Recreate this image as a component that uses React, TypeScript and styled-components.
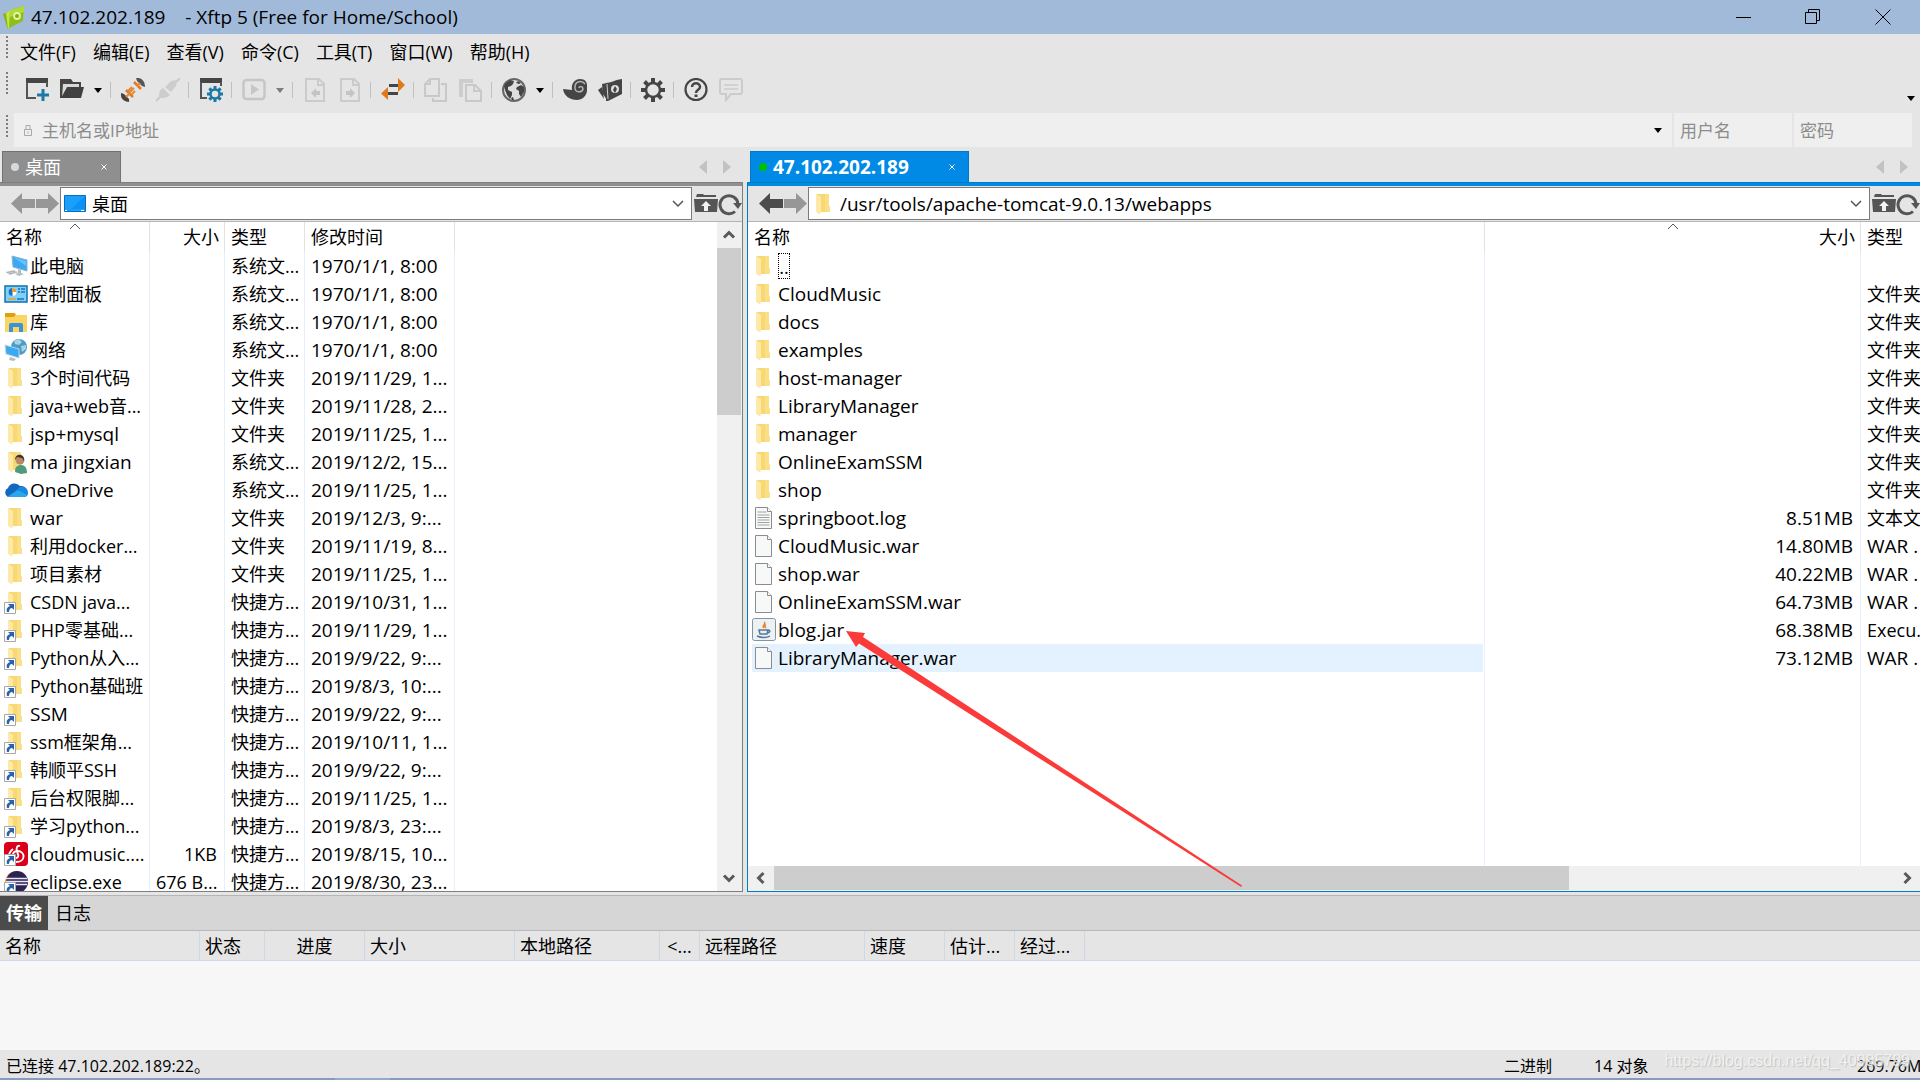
import React from "react";
import styled, { createGlobalStyle, css } from "styled-components";

const Global = createGlobalStyle`
  *, *::before, *::after { box-sizing: border-box; }
  html, body { margin: 0; padding: 0; }
  body { background: #e5e5e5; color: #000; font: 18px/24px "Open Sans", "Noto Sans CJK SC", sans-serif; }
  button, input, select { font: inherit; color: inherit; margin: 0; padding: 0; border: 0; background: none; border-radius: 0; outline: none; }
  svg { display: block; flex: none; }
`;

const Window = styled.div`
  position: relative;
  display: flex;
  flex-direction: column;
  height: 100vh;
  overflow: hidden;
  background: #e5e5e5;
`;

const TitleBar = styled.header`
  flex: none;
  display: flex;
  align-items: center;
  height: 34px;
  padding: 0 2px 0 3px;
  background: #a2bada;
`;
const Title = styled.h1`
  flex: 1;
  margin: 0 0 0 4px;
  font-size: 19px;
  line-height: 34px;
  font-weight: 400;
  white-space: pre;
`;
const WindowButton = styled.button`
  display: grid;
  place-items: center;
  width: 70px;
  height: 34px;
  &:first-of-type { padding-left: 2px; }
`;

const Bar = styled.div<{ $h: number }>`
  flex: none;
  display: flex;
  align-items: center;
  height: ${(p) => p.$h}px;
  padding-left: 6px;
`;
const Grip = styled.span`
  align-self: flex-start;
  width: 2px;
  height: 24px;
  margin-top: 2px;
  background: repeating-linear-gradient(#7c7c7c 0 2px, transparent 2px 4px);
`;
const MenuList = styled.nav`
  display: flex;
  gap: 17px;
  padding-left: 12px;
`;
const MenuButton = styled.button`
  line-height: 24px;
`;

const Tools = styled.div`
  flex: 1;
  align-self: flex-start;
  display: flex;
  align-items: center;
  height: 40px;
  padding-left: 11px;
`;
const ToolButton = styled.button`
  display: grid;
  place-items: center;
  width: 35px;
  height: 30px;
`;
const CaretButton = styled.button`
  display: grid;
  place-items: center;
  width: 18px;
  height: 30px;
`;
const Divider = styled.span`
  width: 1px;
  height: 16px;
  margin: 0 4px 0 3px;
  background: #c0c0c0;
`;
const Overflow = styled(CaretButton)`
  align-self: flex-end;
`;

const HostField = styled.label`
  flex: 1;
  display: flex;
  align-items: center;
  gap: 10px;
  height: 34px;
  margin-left: 6px;
  padding: 0 5px 0 10px;
  background: #efefef;
`;
const FieldInput = styled.input`
  flex: 1;
  min-width: 0;
  height: 34px;
  font-size: 17px;
  &::placeholder { color: #8c8c8c; opacity: 1; }
`;
const SideInput = styled(FieldInput)`
  flex: none;
  width: 118px;
  margin-left: 2px;
  padding-left: 6px;
  background: #efefef;
`;
const AddressBar = styled(Bar)`
  padding-right: 8px;
`;

const Panes = styled.main`
  flex: 1;
  min-height: 0;
  display: grid;
  grid-template-columns: 743fr 1173fr;
  gap: 4px;
  padding-top: 4px;
`;
const Pane = styled.section`
  display: flex;
  flex-direction: column;
  min-width: 0;
  min-height: 0;
`;
const TabRow = styled.div<{ $pad: number }>`
  flex: none;
  display: flex;
  justify-content: space-between;
  height: 31px;
  padding-left: ${(p) => p.$pad}px;
`;
const Tab = styled.div<{ $active?: boolean; $w: number }>`
  display: flex;
  align-items: center;
  width: ${(p) => p.$w}px;
  padding: 0 11px 0 8px;
  border: 1px solid ${(p) => (p.$active ? "#0078c8" : "#727272")};
  border-bottom: 0;
  background: ${(p) => (p.$active ? "#008ae5" : "#8f8f8f")};
  color: #fff;
  ${(p) => p.$active && css`font-weight: 700; font-size: 19px;`}
`;
const TabDot = styled.span<{ $c: string }>`
  width: 8px;
  height: 8px;
  margin-right: 6px;
  border-radius: 50%;
  background: ${(p) => p.$c};
`;
const TabLabel = styled.span`
  flex: 1;
  white-space: nowrap;
`;
const CloseButton = styled.button`
  display: grid;
  place-items: center;
  width: 10px;
  height: 16px;
`;
const TabArrows = styled.div`
  display: flex;
  align-items: center;
  gap: 16px;
  padding-right: 11px;
`;
const Frame = styled.div<{ $active?: boolean }>`
  flex: 1;
  min-height: 0;
  display: flex;
  flex-direction: column;
  border-top: 1px solid;
  border-bottom: 1px solid;
  border-color: ${(p) => (p.$active ? "#007cc4" : "#7f7f7f")};
  ${(p) => (p.$active ? "border-left: 1px solid #007cc4;" : "border-right: 1px solid #7f7f7f;")}
`;
const Stripe = styled.div<{ $active?: boolean }>`
  flex: none;
  height: 3px;
  background: ${(p) => (p.$active ? "#008ae5" : "#8f8f8f")};
`;
const PathRow = styled.div`
  flex: none;
  display: flex;
  align-items: center;
  height: 36px;
  padding: 1px 0 1px 11px;
  border-bottom: 1px solid #b4b4b4;
`;
const IconButton = styled.button`
  display: grid;
  place-items: center;
  width: 24px;
  height: 32px;
`;
const PathBox = styled.label`
  flex: 1;
  min-width: 0;
  display: flex;
  align-items: center;
  height: 33px;
  margin: 0 2px 0 1px;
  padding: 0 7px 0 3px;
  border: 1px solid #7a7a7a;
  background: #fff;
`;
const PathSelect = styled.select<{ $latin?: boolean }>`
  flex: 1;
  min-width: 0;
  height: 30px;
  padding-left: 4px;
  font-size: ${(p) => (p.$latin ? 19 : 18)}px;
  appearance: none;
`;

const ListArea = styled.div`
  flex: 1;
  min-height: 0;
  display: flex;
  background: #fff;
`;
const ListClip = styled.div`
  flex: 1;
  min-width: 0;
  overflow: hidden;
`;
const FileTable = styled.table`
  width: 100%;
  height: 100%;
  table-layout: fixed;
  border-collapse: separate;
  border-spacing: 0;
`;
const Th = styled.th<{ $end?: boolean }>`
  position: relative;
  height: 30px;
  padding: 0 5px 0 6px;
  border-right: 1px solid #e2e2e2;
  font-weight: 400;
  line-height: 30px;
  white-space: nowrap;
  overflow: hidden;
  text-align: ${(p) => (p.$end ? "right" : "left")};
  &:last-child { border-right: 0; }
`;
const SortMark = styled.svg`
  position: absolute;
  top: 1px;
  left: 50%;
  margin-left: -6px;
`;
const Td = styled.td<{ $end?: boolean }>`
  height: 28px;
  padding: 0 ${(p) => (p.$end ? 7 : 0)}px 0 6px;
  border-right: 1px solid #e6f0fc;
  line-height: 28px;
  white-space: nowrap;
  overflow: hidden;
  text-align: ${(p) => (p.$end ? "right" : "left")};
  &:last-child { border-right: 0; }
`;
const NameTd = styled(Td)`
  padding: 0 1px 0 4px;
`;
const NameCell = styled.div<{ $hot?: boolean }>`
  display: flex;
  align-items: center;
  gap: 2px;
  height: 28px;
  background: ${(p) => (p.$hot ? "#e3f2fe" : "transparent")};
`;
const FillTd = styled.td`
  padding: 0;
  border-right: 1px solid #e6f0fc;
  &:last-child { border-right: 0; }
`;
const ParentMark = styled.span`
  width: 12px;
  height: 26px;
  line-height: 28px;
  outline: 1px dotted #000;
  outline-offset: -1px;
  text-align: center;
`;
const VScroll = styled.div`
  flex: none;
  display: flex;
  flex-direction: column;
  width: 25px;
  padding-right: 1px;
  background: #f0f0f0;
`;
const HScroll = styled.div`
  flex: none;
  display: flex;
  height: 25px;
  padding-bottom: 1px;
  background: #f0f0f0;
`;
const ScrollButton = styled.button`
  flex: none;
  display: grid;
  place-items: center;
  width: 26px;
  height: 26px;
  ${VScroll} & { width: 24px; }
  ${HScroll} & { height: 24px; }
`;
const Track = styled.div`
  flex: 1;
  display: flex;
`;
const VThumb = styled.div`
  width: 100%;
  height: 27%;
  background: #cdcdcd;
`;
const HThumb = styled.div`
  width: 71%;
  background: #cdcdcd;
`;

const Dock = styled.section`
  flex: none;
  margin-top: 3px;
  border-top: 1px solid #b5b5b5;
`;
const DockTabs = styled.div`
  display: flex;
  height: 35px;
  border-bottom: 1px solid #b8b8b8;
  background: #d6d6d6;
`;
const DockTab = styled.button<{ $on?: boolean }>`
  padding: 0 ${(p) => (p.$on ? 6 : 7)}px;
  ${(p) => p.$on && css`background: #4b4b4b; color: #fff; font-weight: 700;`}
`;
const DockTable = styled.table`
  width: 100%;
  table-layout: fixed;
  border-collapse: separate;
  border-spacing: 0;
`;
const DockTh = styled.th<{ $mid?: boolean }>`
  height: 30px;
  padding: 0 5px;
  border-right: 1px solid #cfd9e6;
  border-bottom: 1px solid #cfd9e8;
  font-weight: 400;
  white-space: nowrap;
  overflow: hidden;
  text-align: ${(p) => (p.$mid ? "center" : "left")};
  &:last-child { border-right: 0; }
`;
const DockBody = styled.div`
  height: 89px;
  background: #f7f7f7;
`;

const StatusBar = styled.footer`
  flex: none;
  display: flex;
  height: 28px;
  padding-left: 6px;
  font-size: 16px;
  line-height: 32px;
  overflow: hidden;
`;
const StatusCell = styled.span<{ $w?: number }>`
  ${(p) => (p.$w ? `width: ${p.$w}px;` : "flex: 1;")}
  white-space: nowrap;
  overflow: hidden;
`;
const Taskbar = styled.div`
  flex: none;
  height: 2px;
  background: linear-gradient(90deg, #879cbc 335px, #93aacb 335px 390px, #879cbc 390px);
`;
const Watermark = styled.span`
  position: absolute;
  right: 10px;
  bottom: 7px;
  color: #f4f4f4;
  font: 16px/24px "Liberation Sans", sans-serif;
  text-shadow: 1px 1px 1px #bcbcbc;
  opacity: 0.85;
`;
const PointerArrow = styled.svg`
  position: absolute;
  left: 846px;
  top: 631px;
  pointer-events: none;
`;

/* ---------- drawings ---------- */

const S = ({ w = 24, h = 24, children }: { w?: number; h?: number; children: React.ReactNode }) => (
  <svg width={w} height={h} viewBox={`0 0 ${w} ${h}`} fill="none" aria-hidden="true">{children}</svg>
);
const Caret = ({ c = "#000" }: { c?: string }) => <S w={8} h={5}><path d="M0 0h8L4 5z" fill={c} /></S>;
const teeth = [0, 45, 90, 135, 180, 225, 270, 315];

const AppLogo = () => (
  <S>
    <path d="M0 9l5-2 3 14-3 4z" fill="#86b516" />
    <path d="M3 8l5-3 2 15-5 4z" fill="#c9e24a" />
    <path d="M7 5l14-4-1 15L6 23z" fill="#8cc018" />
    <path d="M7 5l14-4v6L7 12z" fill="#aedb36" />
    <ellipse cx="14" cy="11" rx="3.800" ry="4" fill="#e6f3a0" />
    <circle cx="14" cy="11" r="2" fill="#7fae10" />
  </S>
);
const NewIcon = () => (
  <S>
    <path d="M1 0h22v5H1z" fill="#454545" />
    <path d="M2 4v16h9M22 4v5" stroke="#555" strokeWidth="2" />
    <path d="M18 11v12M12 17h12" stroke="#1b79a5" strokeWidth="3" />
  </S>
);
const OpenIcon = () => (
  <S>
    <path d="M1 5h19v4" stroke="#454545" strokeWidth="2" />
    <path d="M3 5h16v4H6l-4 8z" fill="#d8d8d8" />
    <path d="M0 1h11l2 3h8v3h-2V6H3l-1 14H0z" fill="#454545" />
    <path d="M7 9h17l-3 11H1z" fill="#404040" />
  </S>
);
const ConnectIcon = () => (
  <S>
    <path d="M15 0c5-1 9 3 9 9l-3-1-5-5z" fill="#555" />
    <path d="M0 15l3 1 5 5v3c-5 0-9-4-8-9z" fill="#454545" />
    <path d="M13 4l7 7M5 12l7 7" stroke="#e07b1e" strokeWidth="2.500" />
    <path d="M8 15l5-5M5 19l4-4M11 16l3-3M7 13l4-4M16 8l3-3" stroke="#e28a3c" strokeWidth="2" />
  </S>
);
const DisconnectIcon = () => (
  <S>
    <path d="M0 23l4-4M20 4l4-4" stroke="#c9c9c9" strokeWidth="2" />
    <path d="M3 19c0-5 1-7 4-9l7 7c-3 3-6 3-9 3zM9 9l6-6 6-1-1 6-5 6z" fill="#cdcdcd" />
    <path d="M7 9l9 9" stroke="#e5e5e5" strokeWidth="1" />
  </S>
);
const PropsIcon = () => (
  <S>
    <path d="M1 0h22v5H1z" fill="#454545" />
    <path d="M2 4v16h6M22 4v4" stroke="#555" strokeWidth="2" />
    <g fill="#1b79a5">{teeth.map((a) => <rect key={a} x="14.500" y="8" width="3" height="4" transform={`rotate(${a} 16 16)`} />)}</g>
    <circle cx="16" cy="16" r="4.500" stroke="#1b79a5" strokeWidth="2.500" />
  </S>
);
const PlayIcon = () => (
  <S>
    <rect x="1.500" y="2" width="21" height="19" rx="3" stroke="#c6c6c6" strokeWidth="2.500" />
    <path d="M9 6l8 5.500L9 17z" fill="#c6c6c6" />
  </S>
);
const PageIcon = ({ flip }: { flip?: boolean }) => (
  <S>
    <path d="M3 1h13l5 5v17H3z" stroke="#cbcbcb" strokeWidth="2" />
    <path d="M15 1v6h6" stroke="#cbcbcb" strokeWidth="2" />
    <path d={flip ? "M8 13h4v-3l5 5-5 5v-3H8z" : "M17 13h-4v-3l-5 5 5 5v-3h4z"} fill="#c4c4c4" />
  </S>
);
const TransferIcon = () => (
  <S>
    <path d="M8 7.500h10M6 15.500h11" stroke="#454545" strokeWidth="3" />
    <path d="M17 0l7 7-7 7zM7 9v13l-7-6.500z" fill="#df7a1d" />
  </S>
);
const CopyIcon = () => (
  <S>
    <path d="M1 6l5-5h9v17H1zM6 1v5H1" stroke="#c9c9c9" strokeWidth="2" />
    <path d="M17 6h5v17H9v-3" stroke="#c9c9c9" strokeWidth="2" />
  </S>
);
const PasteIcon = () => (
  <S>
    <path d="M0 1h14v4H4v14H0z" fill="#cdcdcd" />
    <path d="M7 7h9l6 6v10H7z" stroke="#c9c9c9" strokeWidth="2" />
    <path d="M15 7v6h7" stroke="#c9c9c9" strokeWidth="2" />
  </S>
);
const GlobeIcon = () => (
  <S>
    <circle cx="12" cy="12" r="11" fill="#dedede" stroke="#666" strokeWidth="2" />
    <path d="M4 5l4-3 4 1-1 3-2 2-3 1 0 3 4 2v3l-2 4-3-4-2-5-1-4zM15 9l4-2 3 2v5l-3 5-2-3v-3l-3-2zM16 3l3 2-2 1-3-1zM9 20l2-1 1 3-2 0z" fill="#454545" />
  </S>
);
const ShellIcon = () => (
  <S>
    <path d="M0 11l9 1c-1-7 3-11 8-11 5 0 7 3 7 6v5c0 6-5 10-10 10C7 22 1 18 0 11z" fill="#454545" />
    <path d="M22 6c-3-4-10-3-10 3-1 6 7 6 8 2 0-3-4-3-4-1" stroke="#b5b5b5" strokeWidth="1.500" />
  </S>
);
const FtpIcon = () => (
  <S>
    <path d="M0 12l4-3 2 12zM4 6l5-1v17l-4-6zM8 5c5 0 8-3 16-4v15l-14 7H8z" fill="#454545" />
    <path d="M9 6l1 15" stroke="#d0d0d0" />
    <circle cx="17" cy="11" r="4" fill="#dedede" />
    <path d="M17 8l2 3-2 4-2-3z" fill="#454545" />
  </S>
);
const GearIcon = () => (
  <S>
    <g fill="#454545">{teeth.map((a) => <rect key={a} x="10" y="0" width="4" height="5" transform={`rotate(${a} 12 12)`} />)}</g>
    <circle cx="12" cy="12" r="7" stroke="#454545" strokeWidth="2.500" />
  </S>
);
const HelpIcon = () => (
  <S>
    <circle cx="12" cy="11.500" r="10.500" stroke="#454545" strokeWidth="2.200" />
    <path d="M8 9c0-5 8-5 8 0 0 3-4 2.500-4 6" stroke="#454545" strokeWidth="2.500" />
    <path d="M10.500 16.500h3v2.500h-3z" fill="#454545" />
  </S>
);
const CommentIcon = () => (
  <S>
    <path d="M3 1h18q2 0 2 2v11q0 2-2 2H12l-5 6v-6H3q-2 0-2-2V3q0-2 2-2z" stroke="#cbcbcb" strokeWidth="2" />
    <path d="M5 7h14M5 11h14" stroke="#cbcbcb" strokeWidth="1.500" />
  </S>
);
const LockIcon = () => (
  <S w={8} h={12}>
    <path d="M.500 5.500h7v6h-7zM2 5V1.500h4V5" stroke="#a8a8a8" />
    <path d="M3.500 7.500h1v2h-1z" fill="#a8a8a8" />
  </S>
);
const ArrowIcon = ({ right, c }: { right?: boolean; c: string }) => (
  <S>
    <path d={right ? "M1 7h12V1l11 10.500L13 22v-6H1z" : "M24 7H11V1L0 11.500 11 22v-6h13z"} fill={c} />
  </S>
);
const UpFolderIcon = () => (
  <S>
    <path d="M2 5l1-3h6l1 1h12v2z" fill="#555" />
    <path d="M0 7h24l-1 13H1z" fill="#555" />
    <path d="M12 9l5 5h-3v5h-4v-5H7z" fill="#f2f2f2" />
  </S>
);
const RefreshIcon = () => (
  <S>
    <path d="M17 19.500A9 9 0 1 1 20 12" stroke="#555" strokeWidth="3" />
    <path d="M15 11h9l-4 6z" fill="#555" />
  </S>
);
const Chevron = () => <S w={12} h={8}><path d="M1 1l5 5 5-5" stroke="#555" strokeWidth="1.500" /></S>;
const DesktopIcon = () => (
  <S w={24} h={18}>
    <path d="M.500.500h21v16H.500z" fill="#1aa0fb" stroke="#0a6db8" />
    <path d="M21 1v13H7z" fill="#0c92f4" />
    <path d="M1 15.500h2M17 15.500h3" stroke="#fff" />
  </S>
);
const FolderShape = () => (
  <>
    <path d="M5 2h12v12l1 1v5H5z" fill="#f8d873" />
    <path d="M13 2h4v12l1 1v5h-5z" fill="#fbdf86" />
    <path d="M4 2l5 3v15l-1 2.500L4 20z" fill="#ffe9a8" />
  </>
);
const Folder = () => <S><FolderShape /></S>;
const LinkBadge = () => (
  <>
    <path d="M.500 12.500h11v11H.500z" fill="#fff" stroke="#a8a8a8" />
    <path d="M4 14h6v6l-2-2c-2 0-3 2-3 4H3c-1-3 0-5 3-6z" fill="#2a63a8" />
  </>
);
const LinkFolder = () => <S><FolderShape /><LinkBadge /></S>;
const ComputerIcon = () => (
  <S>
    <path d="M8 2l15 4v11L9 13z" fill="#39a9f4" stroke="#8fb3cc" />
    <path d="M9 3l13 4v5z" fill="#63c2fa" />
    <path d="M14 15l3 1v3l3 1-5 2-4-2 3-1z" fill="#b5bcc2" />
    <path d="M1 18l9-2 4 2-8 3z" fill="#cdd2d6" />
    <path d="M3 18.500l8-1.500M5 20l8-1.700" stroke="#98a0a7" strokeWidth=".7" />
  </S>
);
const ControlIcon = () => (
  <S>
    <path d="M1 4h22v16H1z" fill="#7fd0fb" stroke="#1171ae" strokeWidth="1.500" />
    <circle cx="8.500" cy="10" r="4" fill="#fff" />
    <path d="M8.500 10V6a4 4 0 0 0 0 8z" fill="#1a72b8" />
    <path d="M8.500 10V6a4 4 0 0 1 4 4z" fill="#f39a2a" />
    <path d="M14 7h2M17 7h4M14 10h2M17 10h4" stroke="#1a72b8" strokeWidth="1.500" />
    <path d="M4 17h8" stroke="#f39a2a" strokeWidth="1.500" />
    <path d="M13 17h7" stroke="#1a72b8" strokeWidth="1.500" />
  </S>
);
const LibraryIcon = () => (
  <S>
    <path d="M1 3h9l2 2h11v17H1z" fill="#fcd462" />
    <path d="M1 3h9l2 1-2 3H1z" fill="#dfa012" />
    <path d="M5 22v-7q0-2 2-2h10q2 0 2 2v7h-4v-5H9v5z" fill="#3b93da" />
  </S>
);
const NetworkIcon = () => (
  <S>
    <circle cx="15" cy="9" r="8" fill="#4b9cc8" />
    <path d="M10 3l5-2 3 3-3 3-4-1zM17 8l5-1v4l-4 3z" fill="#a8d3e4" />
    <path d="M1 7l14 4v9L2 16z" fill="#39a9f4" stroke="#c3d4df" />
    <path d="M6 19l6 2-2 2-5-1z" fill="#b5bcc2" />
  </S>
);
const UserFolder = () => (
  <S>
    <FolderShape />
    <path d="M11 22c0-5 2-7 6-7s6 3 6 8l-6 1z" fill="#4f9a78" />
    <circle cx="16" cy="10" r="4.500" fill="#b98a64" />
    <path d="M11 10c0-7 10-7 9 1l-2-3-5-1z" fill="#3d3630" />
  </S>
);
const CloudIcon = () => (
  <S>
    <path d="M4 19a5 5 0 0 1 0-9 7 7 0 0 1 12-2 6 6 0 0 1 7 6c0 3-2 5-4 5z" fill="#1268bd" />
    <path d="M16 9a6 6 0 0 1 8 6c0 3-2 4-4 4l-9-6z" fill="#1788dc" />
    <path d="M3 19l9-6q2-1 4 0l7 4q-1 2-4 2z" fill="#2aa7ea" />
  </S>
);
const MusicIcon = () => (
  <S>
    <rect width="24" height="24" rx="4" fill="#d9001b" />
    <path d="M16 4c-3-1-4 2-3 5l1 4M9 7c-7 5-3 13 4 13 8 0 9-10 1-11-6 0-7 7-2 7 2 0 3-2 2-4" stroke="#fff" strokeWidth="1.800" />
    <LinkBadge />
  </S>
);
const EclipseIcon = () => (
  <S>
    <path d="M1 16C0 8 4 2 12 1L6 22z" fill="#f59a23" />
    <circle cx="13" cy="12" r="11" fill="#2c2255" />
    <path d="M2 8.500h21M2 11.500h22M2 14.500h21" stroke="#e8e6f2" strokeWidth="1.500" />
    <LinkBadge />
  </S>
);
const FileIcon = ({ lined }: { lined?: boolean }) => (
  <S>
    <path d="M3.500 1.500h12l4 4v17h-16z" fill="#f7f8f8" stroke="#8c8c8c" />
    <path d="M15.500 1.500v4h4" fill="#fff" stroke="#8c8c8c" />
    {lined && <path d="M5.500 6h9M5.500 9h12M5.500 11.500h12M5.500 14h12M5.500 16.500h12M5.500 19h12" stroke="#a2a2a2" />}
  </S>
);
const JarIcon = () => (
  <S>
    <rect x=".5" y=".5" width="23" height="22" rx="2" fill="#eef1f3" stroke="#7f95a6" />
    <path d="M12 4c3 2-3 4 0 6M14 7c-2 1-1 2 0 3" stroke="#e8832a" strokeWidth="1.500" />
    <path d="M7 12h9l-1 4H8zM5 18c4 2 10 2 13 0M16 12c3 0 2 3-1 3" stroke="#54789a" strokeWidth="1.500" />
  </S>
);
const ScrollArrow = ({ a = 0 }: { a?: number }) => (
  <S w={14} h={14}><path d="M2 9.500l5-5 5 5" stroke="#5a5a5a" strokeWidth="3" transform={`rotate(${a} 7 7)`} /></S>
);
const TabArrow = ({ right }: { right?: boolean }) => (
  <S w={9} h={14}><path d={right ? "M0 0l8 7-8 7z" : "M9 0L1 7l8 7z"} fill="#c2c2c2" /></S>
);
const CloseMark = () => <S w={6} h={6}><path d="M.500.500l5 5M5.500.500l-5 5" stroke="#fff" /></S>;
const Sort = () => (
  <SortMark width="12" height="7" viewBox="0 0 12 7" fill="none"><path d="M1 6l5-5 5 5" stroke="#555" /></SortMark>
);

/* ---------- data ---------- */

type Row = { icon: React.ReactNode; name: string; size?: string; type?: string; time?: string; hot?: boolean };
const sys = "系统文...";
const dir = "文件夹";
const lnk = "快捷方...";
const L = <LinkFolder />;
const F = <Folder />;

const localRows: Row[] = [
  { icon: <ComputerIcon />, name: "此电脑", type: sys, time: "1970/1/1, 8:00" },
  { icon: <ControlIcon />, name: "控制面板", type: sys, time: "1970/1/1, 8:00" },
  { icon: <LibraryIcon />, name: "库", type: sys, time: "1970/1/1, 8:00" },
  { icon: <NetworkIcon />, name: "网络", type: sys, time: "1970/1/1, 8:00" },
  { icon: F, name: "3个时间代码", type: dir, time: "2019/11/29, 1..." },
  { icon: F, name: "java+web音...", type: dir, time: "2019/11/28, 2..." },
  { icon: F, name: "jsp+mysql", type: dir, time: "2019/11/25, 1..." },
  { icon: <UserFolder />, name: "ma jingxian", type: sys, time: "2019/12/2, 15..." },
  { icon: <CloudIcon />, name: "OneDrive", type: sys, time: "2019/11/25, 1..." },
  { icon: F, name: "war", type: dir, time: "2019/12/3, 9:..." },
  { icon: F, name: "利用docker...", type: dir, time: "2019/11/19, 8..." },
  { icon: F, name: "项目素材", type: dir, time: "2019/11/25, 1..." },
  { icon: L, name: "CSDN java...", type: lnk, time: "2019/10/31, 1..." },
  { icon: L, name: "PHP零基础...", type: lnk, time: "2019/11/29, 1..." },
  { icon: L, name: "Python从入...", type: lnk, time: "2019/9/22, 9:..." },
  { icon: L, name: "Python基础班", type: lnk, time: "2019/8/3, 10:..." },
  { icon: L, name: "SSM", type: lnk, time: "2019/9/22, 9:..." },
  { icon: L, name: "ssm框架角...", type: lnk, time: "2019/10/11, 1..." },
  { icon: L, name: "韩顺平SSH", type: lnk, time: "2019/9/22, 9:..." },
  { icon: L, name: "后台权限脚...", type: lnk, time: "2019/11/25, 1..." },
  { icon: L, name: "学习python...", type: lnk, time: "2019/8/3, 23:..." },
  { icon: <MusicIcon />, name: "cloudmusic....", size: "1KB", type: lnk, time: "2019/8/15, 10..." },
  { icon: <EclipseIcon />, name: "eclipse.exe", size: "676 B...", type: lnk, time: "2019/8/30, 23..." },
];

const remoteRows: Row[] = [
  { icon: F, name: ".." },
  ...["CloudMusic", "docs", "examples", "host-manager", "LibraryManager", "manager", "OnlineExamSSM", "shop"].map(
    (name) => ({ icon: F, name, type: dir }),
  ),
  { icon: <FileIcon lined />, name: "springboot.log", size: "8.51MB", type: "文本文" },
  { icon: <FileIcon />, name: "CloudMusic.war", size: "14.80MB", type: "WAR ." },
  { icon: <FileIcon />, name: "shop.war", size: "40.22MB", type: "WAR ." },
  { icon: <FileIcon />, name: "OnlineExamSSM.war", size: "64.73MB", type: "WAR ." },
  { icon: <JarIcon />, name: "blog.jar", size: "68.38MB", type: "Execu." },
  { icon: <FileIcon />, name: "LibraryManager.war", size: "73.12MB", type: "WAR .", hot: true },
];

const Latin = styled.span<{ $size: number }>`
  font-size: ${(p) => p.$size}px;
`;
const Txt = ({ children = "", wide }: { children?: string; wide?: boolean }) => (
  <Latin $size={/^[\x00-\x7f]+$/.test(children) && !wide ? 19 : 18}>{children}</Latin>
);

const tools: [string, React.ReactNode][][] = [
  [["新建", <NewIcon />], ["打开", <OpenIcon />], ["caret", <Caret />]],
  [["连接", <ConnectIcon />], ["断开", <DisconnectIcon />]],
  [["属性", <PropsIcon />]],
  [["运行", <PlayIcon />], ["caret", <Caret c="#7c7c7c" />]],
  [["向左传输", <PageIcon />], ["向右传输", <PageIcon flip />]],
  [["同步", <TransferIcon />]],
  [["复制", <CopyIcon />], ["粘贴", <PasteIcon />]],
  [["编码", <GlobeIcon />], ["caret", <Caret />]],
  [["Xshell", <ShellIcon />], ["Xftp", <FtpIcon />]],
  [["选项", <GearIcon />]],
  [["帮助", <HelpIcon />], ["反馈", <CommentIcon />]],
];

type PathProps = { label: string; back: string; icon: React.ReactNode; latin?: boolean; children: string };
const PathLine = ({ label, back, icon, latin, children }: PathProps) => (
  <PathRow>
    <IconButton aria-label="后退"><ArrowIcon c={back} /></IconButton>
    <IconButton aria-label="前进"><ArrowIcon right c="#979797" /></IconButton>
    <PathBox>
      {icon}
      <PathSelect $latin={latin} aria-label={label}><option>{children}</option></PathSelect>
      <Chevron />
    </PathBox>
    <IconButton aria-label="上级目录"><UpFolderIcon /></IconButton>
    <IconButton aria-label="刷新"><RefreshIcon /></IconButton>
  </PathRow>
);
const Arrows = () => (
  <TabArrows>
    <button aria-label="上一个标签"><TabArrow /></button>
    <button aria-label="下一个标签"><TabArrow right /></button>
  </TabArrows>
);

export default function App() {
  return (
    <Window>
      <Global />
      <TitleBar>
        <AppLogo />
        <Title>{"47.102.202.189    - Xftp 5 (Free for Home/School)"}</Title>
        <WindowButton aria-label="最小化"><S w={16} h={16}><path d="M0 8.500h15" stroke="#000" /></S></WindowButton>
        <WindowButton aria-label="还原"><S w={16} h={16}><path d="M.500 3.500h11v11H.500zM3.500 3V.500h11v11H12" stroke="#000" /></S></WindowButton>
        <WindowButton aria-label="关闭"><S w={16} h={16}><path d="M.500.500l15 15M15.500.500l-15 15" stroke="#000" /></S></WindowButton>
      </TitleBar>

      <Bar $h={36}>
        <Grip />
        <MenuList>
          {["文件(F)", "编辑(E)", "查看(V)", "命令(C)", "工具(T)", "窗口(W)", "帮助(H)"].map((m) => (
            <MenuButton key={m}>{m}</MenuButton>
          ))}
        </MenuList>
      </Bar>
      <Bar $h={43}>
        <Grip />
        <Tools>
          {tools.map((group, i) => (
            <React.Fragment key={i}>
              {i > 0 && <Divider />}
              {group.map(([name, icon]) =>
                name === "caret" ? (
                  <CaretButton key={name} aria-label="更多">{icon}</CaretButton>
                ) : (
                  <ToolButton key={name} aria-label={name}>{icon}</ToolButton>
                ),
              )}
            </React.Fragment>
          ))}
        </Tools>
        <Overflow aria-label="工具栏选项"><Caret /></Overflow>
      </Bar>
      <AddressBar $h={34}>
        <Grip />
        <HostField>
          <LockIcon />
          <FieldInput aria-label="主机名" placeholder="主机名或IP地址" />
          <CaretButton aria-label="历史记录"><Caret /></CaretButton>
        </HostField>
        <SideInput aria-label="用户名" placeholder="用户名" />
        <SideInput aria-label="密码" placeholder="密码" />
      </AddressBar>

      <Panes>
        <Pane>
          <TabRow $pad={2}>
            <Tab $w={119}>
              <TabDot $c="#d8d8d8" />
              <TabLabel>桌面</TabLabel>
              <CloseButton aria-label="关闭标签"><CloseMark /></CloseButton>
            </Tab>
            <Arrows />
          </TabRow>
          <Frame>
            <Stripe />
            <PathLine label="本地路径" back="#979797" icon={<DesktopIcon />}>桌面</PathLine>
            <ListArea>
              <ListClip>
                <FileTable>
                  <colgroup>
                    <col style={{ width: 150 }} /><col style={{ width: 75 }} /><col style={{ width: 80 }} /><col style={{ width: 150 }} /><col />
                  </colgroup>
                  <thead>
                    <tr><Th>名称<Sort /></Th><Th $end>大小</Th><Th>类型</Th><Th>修改时间</Th><Th /></tr>
                  </thead>
                  <tbody>
                    {localRows.map((r) => (
                      <tr key={r.name}>
                        <NameTd><NameCell>{r.icon}<Txt wide={r.name.includes(".")}>{r.name}</Txt></NameCell></NameTd>
                        <Td $end><Txt wide>{r.size}</Txt></Td>
                        <Td>{r.type}</Td>
                        <Td><Txt>{r.time}</Txt></Td>
                        <Td />
                      </tr>
                    ))}
                  </tbody>
                </FileTable>
              </ListClip>
              <VScroll>
                <ScrollButton aria-label="向上滚动"><ScrollArrow /></ScrollButton>
                <Track><VThumb /></Track>
                <ScrollButton aria-label="向下滚动"><ScrollArrow a={180} /></ScrollButton>
              </VScroll>
            </ListArea>
          </Frame>
        </Pane>

        <Pane>
          <TabRow $pad={3}>
            <Tab $active $w={219}>
              <TabDot $c="#00c000" />
              <TabLabel>47.102.202.189</TabLabel>
              <CloseButton aria-label="关闭标签"><CloseMark /></CloseButton>
            </Tab>
            <Arrows />
          </TabRow>
          <Frame $active>
            <Stripe $active />
            <PathLine label="远程路径" back="#4c4c4c" latin icon={<Folder />}>/usr/tools/apache-tomcat-9.0.13/webapps</PathLine>
            <ListArea>
              <ListClip>
                <FileTable>
                  <colgroup>
                    <col style={{ width: 737 }} /><col style={{ width: 376 }} /><col />
                  </colgroup>
                  <thead>
                    <tr><Th>名称</Th><Th $end>大小<Sort /></Th><Th>类型</Th></tr>
                  </thead>
                  <tbody>
                    {remoteRows.map((r) => (
                      <tr key={r.name}>
                        <NameTd>
                          <NameCell $hot={r.hot}>
                            {r.icon}
                            {r.name === ".." ? <ParentMark>..</ParentMark> : <Txt>{r.name}</Txt>}
                          </NameCell>
                        </NameTd>
                        <Td $end><Txt>{r.size}</Txt></Td>
                        <Td><Txt wide={r.type === "Execu."}>{r.type}</Txt></Td>
                      </tr>
                    ))}
                    <tr><FillTd /><FillTd /><FillTd /></tr>
                  </tbody>
                </FileTable>
              </ListClip>
            </ListArea>
            <HScroll>
              <ScrollButton aria-label="向左滚动"><ScrollArrow a={270} /></ScrollButton>
              <Track><HThumb /></Track>
              <ScrollButton aria-label="向右滚动"><ScrollArrow a={90} /></ScrollButton>
            </HScroll>
          </Frame>
        </Pane>
      </Panes>

      <Dock>
        <DockTabs>
          <DockTab $on>传输</DockTab>
          <DockTab>日志</DockTab>
        </DockTabs>
        <DockTable>
          <colgroup>
            {[200, 65, 100, 150, 145, 40, 165, 80, 70, 70].map((w, i) => <col key={i} style={{ width: w }} />)}
            <col />
          </colgroup>
          <thead>
            <tr>
              <DockTh>名称</DockTh><DockTh>状态</DockTh><DockTh $mid>进度</DockTh><DockTh>大小</DockTh><DockTh>本地路径</DockTh>
              <DockTh $mid>{"<..."}</DockTh><DockTh>远程路径</DockTh><DockTh>速度</DockTh><DockTh>估计...</DockTh><DockTh>经过...</DockTh><DockTh />
            </tr>
          </thead>
        </DockTable>
        <DockBody />
      </Dock>

      <StatusBar>
        <StatusCell>已连接 47.102.202.189:22。</StatusCell>
        <StatusCell $w={90}>二进制</StatusCell>
        <StatusCell $w={263}>14 对象</StatusCell>
        <StatusCell $w={63}>269.76M</StatusCell>
      </StatusBar>
      <Taskbar />
      <Watermark>https://blog.csdn.net/qq_40995799</Watermark>

      <PointerArrow width="400" height="258" viewBox="0 0 400 258" aria-hidden="true">
        <path d="M0 0l19 2-2 4 95 62.500L396 254.500l-.8 1.400L101 68.500 13 12.500l-3 3.500z" fill="#fb3b3a" />
      </PointerArrow>
    </Window>
  );
}
